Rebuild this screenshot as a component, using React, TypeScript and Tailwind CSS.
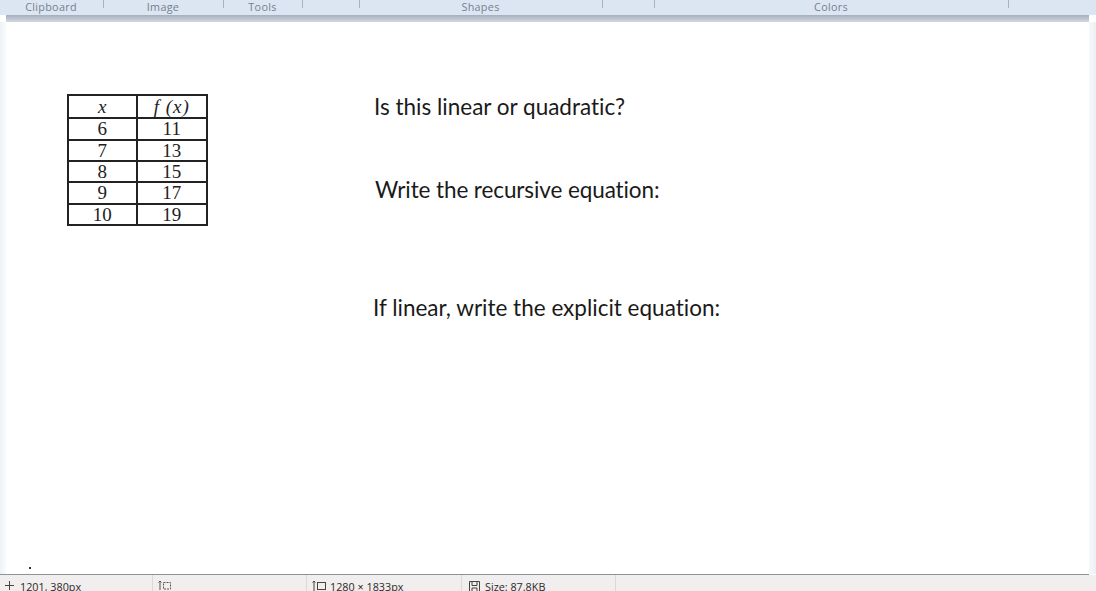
const sections = [
  { w: "w-[104px]", label: "Clipboard" },
  { w: "w-[120px]", label: "Image" },
  { w: "w-[79px]", label: "Tools" },
  { w: "w-[57px]", label: "" },
  { w: "w-[243px]", label: "Shapes" },
  { w: "w-[52px]", label: "" },
  { w: "w-[354px]", label: "Colors" },
];

const rows = [
  ["6", "11"],
  ["7", "13"],
  ["8", "15"],
  ["9", "17"],
  ["10", "19"],
];

function Ribbon() {
  return (
    <div className="flex h-[15px] shrink-0 bg-[#dce6f3]">
      {sections.map((s, i) => (
        <div key={i} className={`${s.w} relative flex h-[15px] shrink-0 justify-center`}>
          <span className="-mt-[1px] pr-[2px] text-[10.8px] leading-[15px] tracking-[0.3px] text-[#75808e]">{s.label}</span>
          <span className="absolute right-0 top-0 h-[8px] w-px bg-[#a9b2bd]" />
        </div>
      ))}
    </div>
  );
}

function DataTable() {
  const cell = "flex items-center justify-center text-[19px] leading-none text-[#222]";
  return (
    <div className="grid h-[132px] w-[141px] grid-cols-2 grid-rows-6 border-2 border-[#222] [font-family:'Liberation_Serif',serif]">
      <div className={`${cell} border-r-2 border-[#222] italic`}>x</div>
      <div className={`${cell} italic tracking-[1px]`}>f (x)</div>
      {rows.map(([a, b]) => (
        <div key={a} className="contents">
          <div className={`${cell} border-r-2 border-t-2 border-[#222]`}>{a}</div>
          <div className={`${cell} border-t-2 border-[#222]`}>{b}</div>
        </div>
      ))}
    </div>
  );
}

function Canvas() {
  const line = "text-[22.5px] leading-[28px] text-[#1a1a1a] whitespace-nowrap [font-variant-ligatures:none]";
  return (
    <div className="flex min-h-0 flex-1">
      <div className="w-[6px] shrink-0 bg-gradient-to-r from-[#eef1f6] to-[#fafbfc]" />
      <div className="flex w-[1083px] shrink-0 flex-col bg-white">
        <div className="flex flex-1">
          <div className="ml-[61px] mt-[72px] w-[308px] shrink-0">
            <DataTable />
          </div>
          <div className="flex flex-col [font-family:'Lato',sans-serif]">
            <div className={`${line} ml-[-1px] mt-[71px]`}>Is this linear or quadratic?</div>
            <div className={`${line} mt-[55px] tracking-[-0.1px]`}>Write the recursive equation:</div>
            <div className={`${line} ml-[-2px] mt-[90px]`}>If linear, write the explicit equation:</div>
          </div>
        </div>
        <div className="mb-[5px] ml-[23px] h-[2px] w-[2px] bg-[#333]" />
      </div>
      <div className="flex-1 bg-gradient-to-r from-[#f7f8fb] to-[#eceff5]" />
    </div>
  );
}

function StatusBar() {
  const sep = "border-r border-[#dcd8d8]";
  const txt = "text-[10.8px] leading-[14px] text-[#2a2a2a] whitespace-nowrap";
  return (
    <div className="shrink-0 [font-family:'Open_Sans',sans-serif]">
      <div className="h-px w-[1089px] bg-[#8f9296]" />
      <div className="flex h-[16px] bg-gradient-to-b from-[#efefef] to-[#f3eced]">
        <div className={`flex w-[153px] shrink-0 gap-[6px] pl-[5px] pt-[5px] ${sep}`}>
          <svg width="9" height="9" viewBox="0 0 9 9" className="mt-[1px]" stroke="#444" fill="none">
            <path d="M4.5 0v9M0 4.5h9" />
          </svg>
          <span className={txt}>1201, 380px</span>
        </div>
        <div className={`flex w-[154px] shrink-0 pl-[5px] pt-[6px] ${sep}`}>
          <svg width="14" height="9" viewBox="0 0 14 9" stroke="#555" fill="none">
            <path d="M2 0v9M0.5 1.5L2 0l1.5 1.5" />
            <rect x="5.5" y="1.5" width="7" height="6.5" strokeDasharray="2 1" />
          </svg>
        </div>
        <div className={`flex w-[155px] shrink-0 gap-[4px] pl-[5px] pt-[5px] ${sep}`}>
          <svg width="14" height="10" viewBox="0 0 14 10" stroke="#444" fill="none" className="mt-[1px]">
            <path d="M2 0v10M0.5 1.5L2 0l1.5 1.5" />
            <rect x="5.5" y="1.5" width="8" height="7" />
          </svg>
          <span className={txt}>1280 × 1833px</span>
        </div>
        <div className={`flex w-[154px] shrink-0 gap-[5px] pl-[7px] pt-[5px] ${sep}`}>
          <svg width="11" height="11" viewBox="0 0 11 11" stroke="#444" fill="none" className="mt-[1px]">
            <path d="M0.5 0.5h10v10h-10zM3 0.5v4h5v-4M3 10.5v-3.5h5v3.5" />
          </svg>
          <span className={txt}>Size: 87.8KB</span>
        </div>
      </div>
    </div>
  );
}

export default function App() {
  return (
    <div className="flex h-[591px] w-[1096px] flex-col overflow-hidden bg-white [font-family:'Open_Sans',sans-serif]">
      <Ribbon />
      <div className="ml-[6px] h-[7px] w-[1083px] shrink-0 bg-gradient-to-b from-[#a3afbd] to-[#d3d9e0]" />
      <Canvas />
      <StatusBar />
    </div>
  );
}
